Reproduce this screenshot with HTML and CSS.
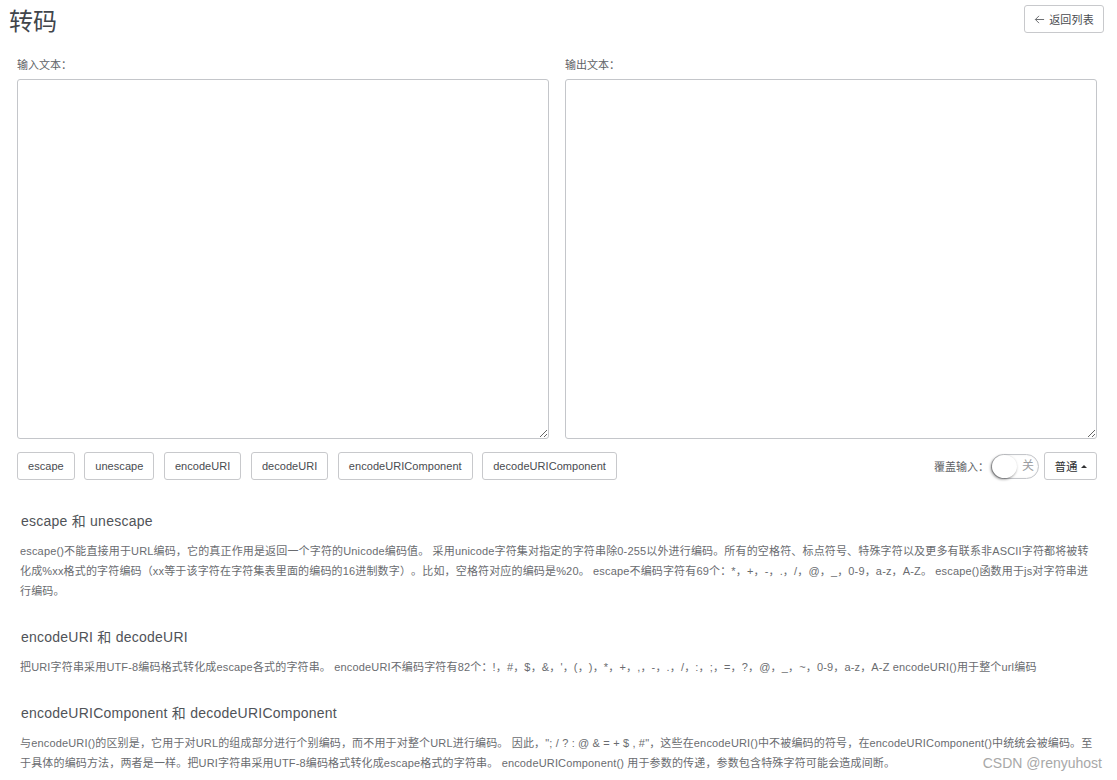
FILE: index.html
```html
<!DOCTYPE html>
<html lang="zh-CN">
<head>
<meta charset="utf-8">
<title>转码</title>
<link rel="stylesheet" href="styles.css">
</head>
<body>
<header class="page-head">
  <h1 class="page-title">转码</h1>
  <button class="btn btn-back"><svg class="back-icon" viewBox="0 0 12 12" width="11" height="11"><path d="M11 6H1.5M5.5 2 1.5 6l4 4" fill="none" stroke="#606266" stroke-width="1"/></svg>返回列表</button>
</header>
<main class="tool">
  <div class="editors">
    <div class="editor">
      <label class="field-label">输入文本：</label>
      <textarea class="field"></textarea>
    </div>
    <div class="editor">
      <label class="field-label">输出文本：</label>
      <textarea class="field"></textarea>
    </div>
  </div>
  <div class="actions">
    <div class="action-group">
      <button class="btn">escape</button>
      <button class="btn">unescape</button>
      <button class="btn">encodeURI</button>
      <button class="btn">decodeURI</button>
      <button class="btn">encodeURIComponent</button>
      <button class="btn">decodeURIComponent</button>
    </div>
    <div class="options">
      <span class="option-label">覆盖输入：</span>
      <span class="switch"><span class="switch-knob"></span><span class="switch-text">关</span></span>
      <button class="btn btn-mode">普通<span class="caret"></span></button>
    </div>
  </div>
</main>
<section class="docs">
  <article class="doc">
    <h3 class="doc-title">escape 和 unescape</h3>
    <p class="doc-text">escape()不能直接用于URL编码，它的真正作用是返回一个字符的Unicode编码值。 采用unicode字符集对指定的字符串除0-255以外进行编码。所有的空格符、标点符号、特殊字符以及更多有联系非ASCII字符都将被转化成%xx格式的字符编码（xx等于该字符在字符集表里面的编码的16进制数字）。比如，空格符对应的编码是%20。 escape不编码字符有69个：*，+，-，.，/，@，_，0-9，a-z，A-Z。 escape()函数用于js对字符串进行编码。</p>
  </article>
  <article class="doc">
    <h3 class="doc-title">encodeURI 和 decodeURI</h3>
    <p class="doc-text">把URI字符串采用UTF-8编码格式转化成escape各式的字符串。 encodeURI不编码字符有82个：!，#，$，&amp;，'，(，)，*，+，,，-，.，/，:，;，=，?，@，_，~，0-9，a-z，A-Z encodeURI()用于整个url编码</p>
  </article>
  <article class="doc">
    <h3 class="doc-title">encodeURIComponent 和 decodeURIComponent</h3>
    <p class="doc-text">与encodeURI()的区别是，它用于对URL的组成部分进行个别编码，而不用于对整个URL进行编码。 因此，"; / ? : @ &amp; = + $ , #"，这些在encodeURI()中不被编码的符号，在encodeURIComponent()中统统会被编码。至于具体的编码方法，两者是一样。把URI字符串采用UTF-8编码格式转化成escape格式的字符串。 encodeURIComponent() 用于参数的传递，参数包含特殊字符可能会造成间断。</p>
  </article>
</section>
<div class="watermark">CSDN @renyuhost</div>
</body>
</html>
```
FILE: styles.css
```css
* { box-sizing: border-box; }
html, body { height: 780px; overflow: hidden; }
body {
  margin: 0;
  position: relative;
  background: #fff;
  color: #606266;
  font-family: "Liberation Sans", "Noto Sans CJK SC", sans-serif;
  font-size: 11px;
  text-spacing-trim: space-all;
}
.page-head {
  display: flex;
  justify-content: space-between;
  align-items: flex-start;
  height: 56px;
  padding: 5px 13px 0 9px;
}
.page-title {
  margin: 0;
  font-size: 24px;
  font-weight: 400;
  line-height: 34px;
  color: #41454b;
}
.btn {
  height: 28px;
  padding: 0 10px;
  border: 1px solid #c8c9cc;
  border-radius: 3px;
  background: #fff;
  color: #494b50;
  font: inherit;
  white-space: nowrap;
  letter-spacing: .05px;
}
.btn-back { width: 80px; height: 28px; padding: 0; display: flex; align-items: center; justify-content: center; gap: 4px; letter-spacing: .15px; }
.back-icon { display: block; }
.tool { padding: 0 20px 0 17px; }
.editors { display: flex; gap: 16px; }
.editor { flex: 1; min-width: 0; }
.field-label { display: block; height: 23px; line-height: 18px; color: #606266; }
.field {
  display: block;
  width: 100%;
  height: 360px;
  border: 1px solid #c4c6ca;
  border-radius: 3px;
  background: #fff;
  outline: none;
  resize: both;
}
.actions {
  display: flex;
  justify-content: space-between;
  align-items: center;
  margin-top: 13px;
}
.action-group { display: flex; gap: 9.5px; }
.options { display: flex; align-items: center; }
.option-label { margin-right: 2px; color: #606266; }
.switch {
  position: relative;
  display: block;
  width: 48px;
  height: 25px;
  margin-right: 5px;
  border: 1px solid #c4c6ca;
  border-radius: 13px;
  background: #fff;
  box-shadow: inset 0 0 2px rgba(0,0,0,.08);
}
.switch-knob {
  position: absolute;
  left: 0;
  top: 0;
  width: 25px;
  height: 23px;
  border-radius: 50%;
  background: #fff;
  box-shadow: -1px 1px 3px rgba(0,0,0,.55);
}
.switch-text {
  position: absolute;
  right: 4px;
  top: 3px;
  font-size: 12px;
  line-height: 16px;
  color: #9b9da1;
}
.btn-mode { width: 53px; padding: 0; display: flex; align-items: center; justify-content: center; gap: 3px; color: #303133; letter-spacing: 0; font-size: 11.5px; }
.caret {
  width: 0;
  height: 0;
  border-left: 3px solid transparent;
  border-right: 3px solid transparent;
  border-bottom: 3px solid #303133;
}
.docs { padding: 31px 20px 0 20px; }
.doc { margin-bottom: 26px; }
.doc-title {
  margin: 0 0 10px 1px;
  font-size: 14px;
  font-weight: 400;
  line-height: 20px;
  letter-spacing: .24px;
  color: #505358;
}
.doc-text {
  margin: 0;
  font-size: 11px;
  line-height: 20px;
  letter-spacing: .16px;
  color: #6a6c70;
}
.watermark {
  position: absolute;
  right: 15px;
  bottom: 8px;
  font-size: 14px;
  line-height: 18px;
  color: #a8a8a8;
}
```
